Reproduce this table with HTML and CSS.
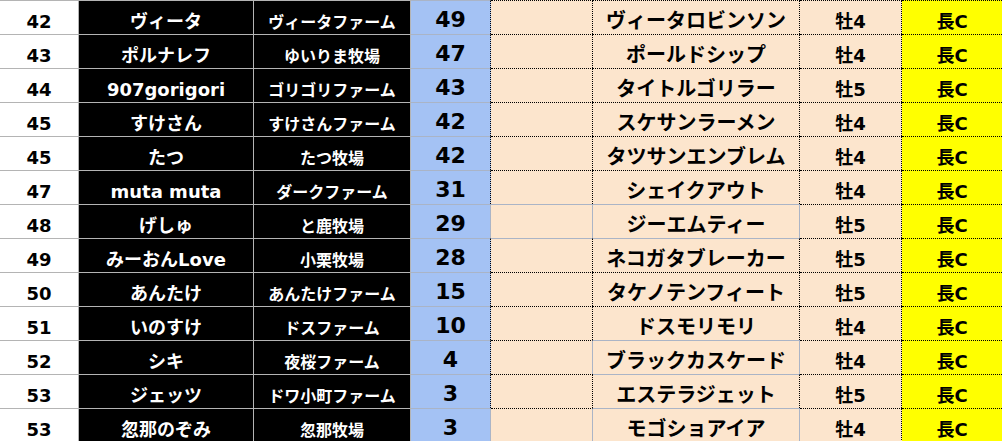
FILE: index.html
```html
<!DOCTYPE html>
<html lang="ja">
<head>
<meta charset="utf-8">
<title>ランキング</title>
<link rel="stylesheet" href="styles.css">
</head>
<body>
<div class="sheet">
  <div class="c rank">42</div><div class="c name">ヴィータ</div><div class="c farm">ヴィータファーム</div><div class="c pt dr">49</div><div class="c blank"></div><div class="c horse">ヴィータロビンソン</div><div class="c sex">牡4</div><div class="c dist">長C</div>
  <div class="c rank">43</div><div class="c name">ポルナレフ</div><div class="c farm">ゆいりま牧場</div><div class="c pt dr">47</div><div class="c blank"></div><div class="c horse">ポールドシップ</div><div class="c sex">牡4</div><div class="c dist">長C</div>
  <div class="c rank">44</div><div class="c name">907gorigori</div><div class="c farm">ゴリゴリファーム</div><div class="c pt dr">43</div><div class="c blank"></div><div class="c horse">タイトルゴリラー</div><div class="c sex">牡5</div><div class="c dist">長C</div>
  <div class="c rank">45</div><div class="c name">すけさん</div><div class="c farm">すけさんファーム</div><div class="c pt dr">42</div><div class="c blank"></div><div class="c horse">スケサンラーメン</div><div class="c sex">牡4</div><div class="c dist">長C</div>
  <div class="c rank">45</div><div class="c name">たつ</div><div class="c farm">たつ牧場</div><div class="c pt dr">42</div><div class="c blank"></div><div class="c horse">タツサンエンブレム</div><div class="c sex">牡4</div><div class="c dist">長C</div>
  <div class="c rank">47</div><div class="c name">muta muta</div><div class="c farm">ダークファーム</div><div class="c pt dr">31</div><div class="c blank"></div><div class="c horse">シェイクアウト</div><div class="c sex">牡4</div><div class="c dist">長C</div>
  <div class="c rank">48</div><div class="c name">げしゅ</div><div class="c farm">と鹿牧場</div><div class="c pt">29</div><div class="c blank gt gr"></div><div class="c horse gt gr">ジーエムティー</div><div class="c sex">牡5</div><div class="c dist">長C</div>
  <div class="c rank">49</div><div class="c name">みーおんLove</div><div class="c farm">小栗牧場</div><div class="c pt dr">28</div><div class="c blank gt"></div><div class="c horse gt">ネコガタブレーカー</div><div class="c sex">牡5</div><div class="c dist">長C</div>
  <div class="c rank">50</div><div class="c name">あんたけ</div><div class="c farm">あんたけファーム</div><div class="c pt dr">15</div><div class="c blank"></div><div class="c horse">タケノテンフィート</div><div class="c sex">牡5</div><div class="c dist">長C</div>
  <div class="c rank">51</div><div class="c name">いのすけ</div><div class="c farm">ドスファーム</div><div class="c pt dr">10</div><div class="c blank"></div><div class="c horse">ドスモリモリ</div><div class="c sex">牡4</div><div class="c dist">長C</div>
  <div class="c rank">52</div><div class="c name">シキ</div><div class="c farm">夜桜ファーム</div><div class="c pt dr">4</div><div class="c blank gr"></div><div class="c horse gt gr">ブラックカスケード</div><div class="c sex">牡4</div><div class="c dist">長C</div>
  <div class="c rank">53</div><div class="c name">ジェッツ</div><div class="c farm">ドワ小町ファーム</div><div class="c pt dr">3</div><div class="c blank"></div><div class="c horse gt">エステラジェット</div><div class="c sex">牡5</div><div class="c dist">長C</div>
  <div class="c rank">53</div><div class="c name">忽那のぞみ</div><div class="c farm">忽那牧場</div><div class="c pt">3</div><div class="c blank gr"></div><div class="c horse gt gr">モゴショアイア</div><div class="c sex">牡4</div><div class="c dist">長C</div>
</div>
</body>
</html>
```

FILE: styles.css
```css
html, body {
  margin: 0;
  padding: 0;
  background: #ffffff;
  overflow: hidden;
}

.sheet {
  display: grid;
  grid-template-columns: 79px 175px 157px 80px 102px 207px 102px 100px;
  grid-auto-rows: 34px;
  width: 1002px;
  font-family: "DejaVu Sans", "Noto Sans CJK JP", sans-serif;
  font-weight: 700;
}

.c {
  box-sizing: border-box;
  display: flex;
  align-items: flex-end;
  justify-content: center;
  padding-bottom: 3px;
  line-height: 1;
  white-space: nowrap;
  overflow: hidden;
  border-top: 1px solid #b4b4b4;
  border-right: 1px solid #b4b4b4;
  color: #000;
}

.rank {
  background: #ffffff;
  font-size: 18px;
}

.name {
  background: #000000;
  color: #ffffff;
  font-size: 18px;
}

.farm {
  background: #000000;
  color: #ffffff;
  font-size: 16px;
}

.pt {
  background: #a4c2f4;
  font-size: 22px;
  border-right-color: #aab4c6;
  border-top-color: #aab4c6;
}

.pt.dr {
  border-right: 1px dotted #000;
}

.blank, .horse, .sex, .dist {
  background: #fce5cd;
  border-top: 1px dotted #000;
  border-right: 1px dotted #000;
}

.horse {
  font-size: 20px;
}

.sex {
  font-size: 18px;
}

.dist {
  background: #ffff00;
  font-size: 18px;
  border-right: none;
}

.gt {
  border-top: 1px solid #aab4c6;
}

.gr {
  border-right: 1px solid #aab4c6;
}
```
